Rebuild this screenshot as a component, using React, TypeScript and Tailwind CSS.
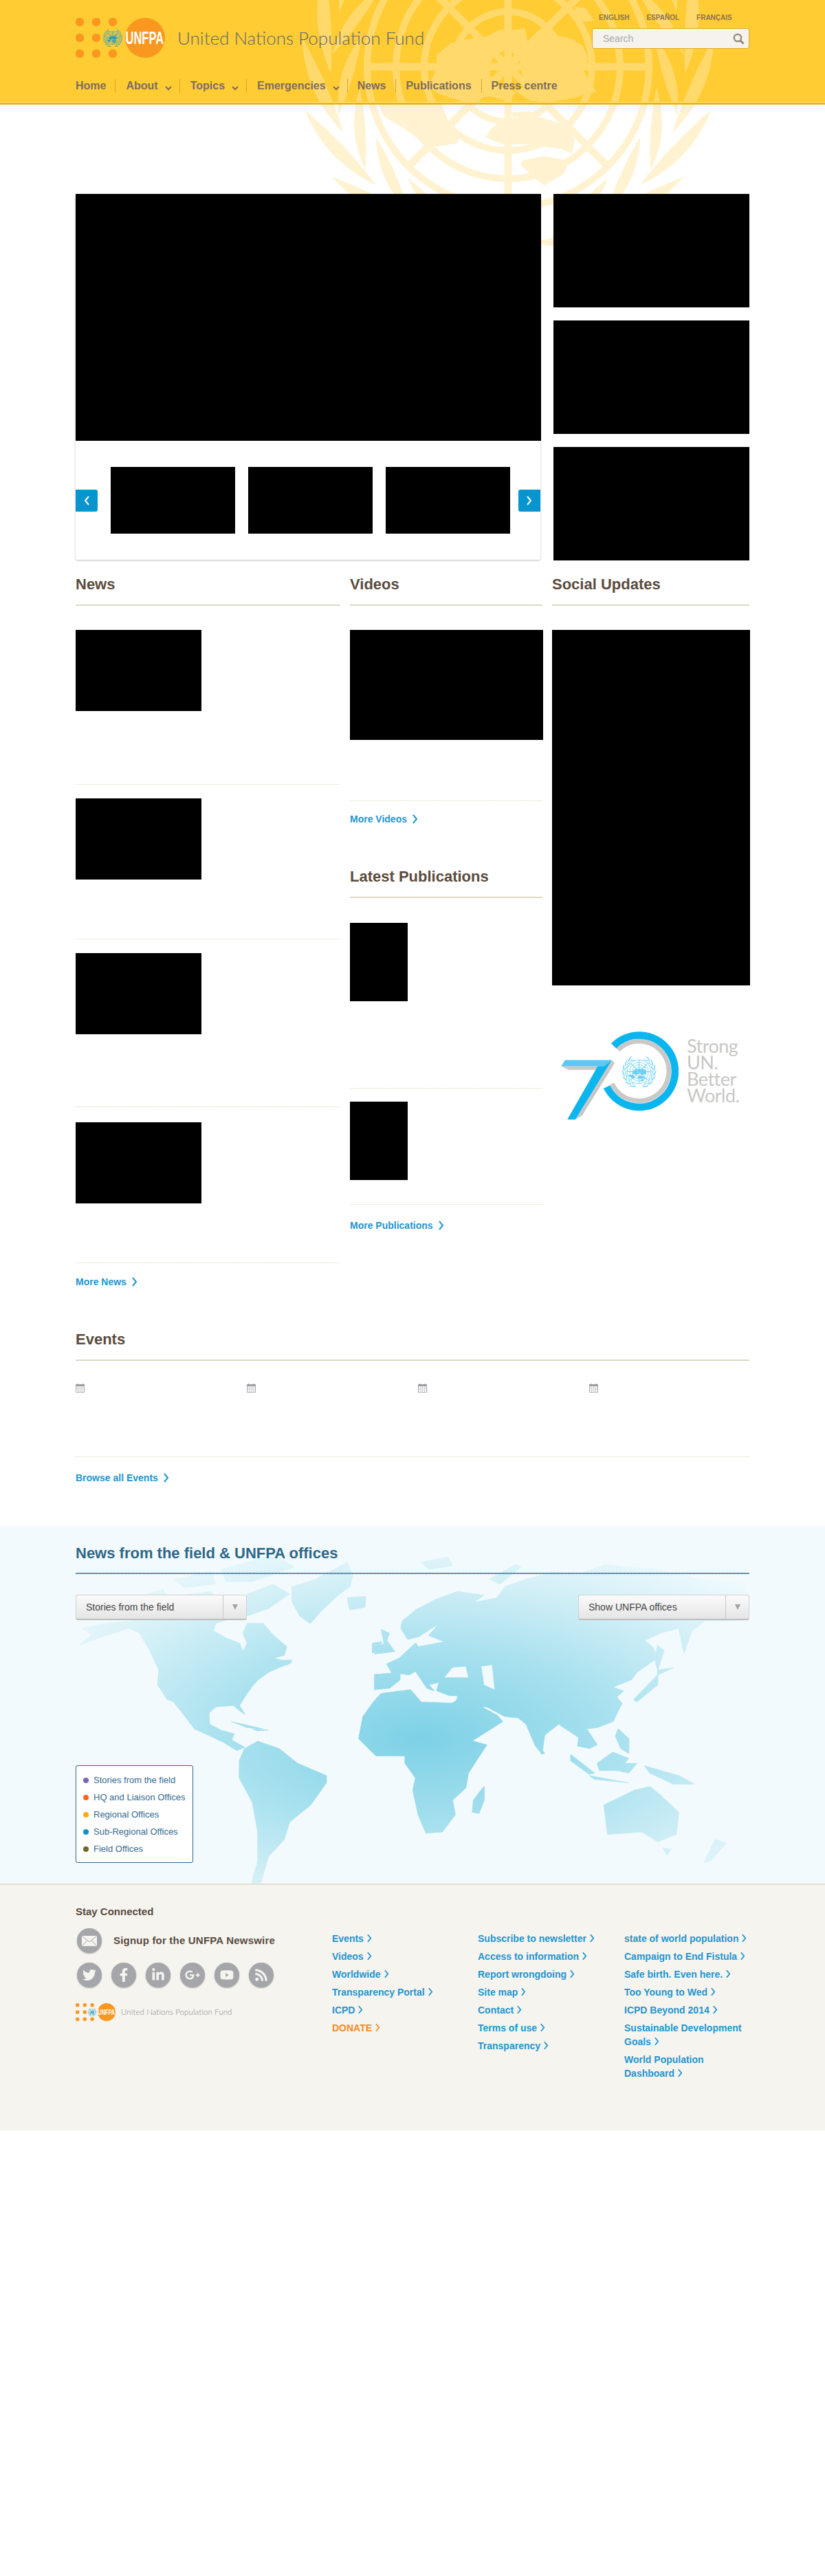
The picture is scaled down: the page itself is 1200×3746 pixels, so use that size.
import React from "react";
import { FaTwitter, FaFacebookF, FaLinkedinIn, FaGooglePlusG, FaYoutube, FaRss } from "react-icons/fa";

const P = (pts: number[][], fn?: (x: number, y: number) => string) =>
  "M" + pts.map(([x, y]) => (fn ? fn(x, y) : `${x},${y}`)).join(" L") + " Z";

const L = (X: number, Y: number) => `${(X / 2.489 - 309).toFixed(1)},${(Y / 3 - 97).toFixed(1)}`;

const land = [
  [[510,240],[560,190],[620,170],[690,160],[740,130],[800,130],[830,120],[840,180],[880,130],[930,150],[1000,170],[1040,200],[1060,260],[1040,300],[1060,350],[1090,400],[1000,430],[940,440],[850,440],[800,400],[770,440],[700,420],[600,440],[520,410],[480,380],[510,300]],
  [[700,290],[720,240],[765,215],[810,250],[820,320],[830,380],[790,400],[740,380],[705,330]],
  [[1010,30],[1050,35],[1080,90],[1040,95],[1015,60]],
  [[300,456],[530,456],[550,520],[590,600],[585,625],[510,640],[450,610],[380,550],[320,510]],
  [[700,570],[730,540],[790,510],[880,510],[950,535],[1000,580],[1010,620],[1000,670],[960,650],[850,630],[750,630],[690,600]],
  [[820,700],[900,680],[980,700],[1000,680],[970,760],[900,810],[850,760],[815,720]],
  [[780,490],[850,485],[860,510],[790,515]],
];
const landPath = land.map((s) => P(s, L)).join(" ");

const polar = (side: number, r: number, deg: number) => {
  const a = (deg * Math.PI) / 180;
  return `${(side * r * Math.sin(a)).toFixed(1)},${(r * Math.cos(a)).toFixed(1)}`;
};
const leaf = (side: number, r0: number, r1: number, a0: number, len: number, w: number) => {
  const rm = (r0 + r1) / 2;
  const am = a0 + len / 2;
  return `M${polar(side, r0, a0)} Q${polar(side, rm + w, am)} ${polar(side, r1, a0 + len)} Q${polar(side, rm - w, am)} ${polar(side, r0, a0)} Z`;
};
const wreathPath = (() => {
  const out: string[] = [];
  for (const side of [1, -1]) {
    for (let a = 8; a < 135; a += 20) {
      out.push(leaf(side, 258, 302, a, 30, 20));
      out.push(leaf(side, 256, 218, a + 6, 28, 17));
    }
  }
  return out.join(" ");
})();

const spokes = [0, 45, 90, 135]
  .map((d) => {
    const a = (d * Math.PI) / 180;
    const c = Math.cos(a);
    const s = Math.sin(a);
    const pt = (x: number, y: number) => `${(x * c - y * s).toFixed(2)},${(x * s + y * c).toFixed(2)}`;
    return `M${pt(-205, -5.5)} L${pt(205, -5.5)} L${pt(205, 5.5)} L${pt(-205, 5.5)} Z`;
  })
  .join(" ");

function Emblem({ id, color, dither, size, x, y, className }: { id: string; color: string; dither?: boolean; size: number; x?: number; y?: number; className?: string }) {
  const paint = dither ? `url(#${id})` : color;
  return (
    <svg x={x} y={y} width={size} height={size} viewBox="-310 -310 620 620" className={className} aria-hidden="true">
      {dither && (
        <defs>
          <pattern id={id} width="2" height="2" patternUnits="userSpaceOnUse">
            <rect x="0" y="0" width="1" height="1" fill={color} shapeRendering="crispEdges" />
            <rect x="1" y="1" width="1" height="1" fill={color} shapeRendering="crispEdges" />
          </pattern>
        </defs>
      )}
      <path d={wreathPath} fill={paint} />
      {[80, 122, 163, 205].map((r) => (
        <circle key={r} r={r} fill="none" stroke={paint} strokeWidth={10} />
      ))}
      <path d={spokes} fill={paint} />
      <path d={landPath} fill={paint} fillRule="evenodd" />
    </svg>
  );
}

function Logo({ id, w, h }: { id: string; w: number; h: number }) {
  const dots = [
    [6, 6], [30, 6], [54, 6],
    [6, 29], [30, 29],
    [6, 52], [30, 52], [54, 52],
  ];
  return (
    <svg width={w} height={h} viewBox="0 0 130 58" className="block shrink-0">
      {dots.map(([cx, cy]) => (
        <circle key={`${cx}-${cy}`} cx={cx} cy={cy} r={6.2} fill="#f9971f" />
      ))}
      <circle cx={101} cy={29} r={29} fill="#f9971f" />
      <Emblem id={id} color="#1f9cc4" size={30} x={39} y={14} />
      <text transform="translate(72.5 38) scale(0.66 1)" fontFamily="'Liberation Sans', Arial, sans-serif" fontWeight="700" fontSize={25} fill="#ffffff">
        UNFPA
      </text>
    </svg>
  );
}

const Chevron = ({ className, dir = "right" }: { className: string; dir?: "right" | "left" }) => (
  <svg viewBox="0 0 8 14" fill="none" stroke="currentColor" strokeWidth="2" className={className} aria-hidden="true">
    <path d={dir === "left" ? "M7 1 L2 7 L7 13" : "M1 1 L6 7 L1 13"} />
  </svg>
);

const Heading = ({ children, className = "" }: { children: React.ReactNode; className?: string }) => (
  <h2 className={`h-[46px] border-b-2 border-[#d9d9c3] text-[22px] leading-[30px] font-bold text-[#5a4b3d] ${className}`}>{children}</h2>
);

const More = ({ children, className = "" }: { children: React.ReactNode; className?: string }) => (
  <a className={`flex h-[20px] items-center text-[14px] leading-[20px] font-bold text-[#1f95cf] ${className}`}>
    {children}
    <Chevron className="ml-[8px] h-[14px] w-[8px]" />
  </a>
);

const Calendar = () => (
  <svg width="13" height="13" viewBox="0 0 13 13" className="block" aria-hidden="true">
    <rect x="0" y="1" width="13" height="12" fill="#a9abae" />
    <rect x="0" y="1" width="13" height="3" fill="#9b9da1" />
    <rect x="2" y="0" width="1.5" height="2" fill="#9b9da1" />
    <rect x="9.5" y="0" width="1.5" height="2" fill="#9b9da1" />
    <path d="M1 4h11v8H1z" fill="#ffffff" />
    <path d="M1 6.5h11M1 9h11M3.5 4v8M6.5 4v8M9.5 4v8" stroke="#d0d1d4" strokeWidth="1" fill="none" />
  </svg>
);

const map = {
  na: [[150,540],[175,495],[155,470],[200,450],[250,440],[280,380],[420,380],[440,430],[410,450],[405,480],[430,510],[455,530],[462,565],[470,530],[462,490],[470,450],[500,450],[520,500],[545,545],[540,580],[520,592],[555,610],[530,630],[510,650],[490,680],[478,710],[465,750],[455,785],[465,820],[452,800],[445,785],[410,790],[397,815],[398,860],[420,885],[445,900],[440,925],[465,955],[450,968],[425,935],[395,905],[370,880],[345,810],[330,770],[318,760],[300,700],[302,640],[285,560],[265,490],[245,470],[210,495],[180,515]],
  baffin: [[470,330],[520,290],[550,330],[510,390],[470,420],[465,380]],
  victoria: [[330,340],[400,320],[420,370],[360,375],[320,370]],
  ellesmere: [[420,230],[520,170],[560,220],[480,280],[430,280]],
  banks: [[280,330],[310,310],[320,360],[285,370]],
  arctic2: [[330,270],[400,240],[410,290],[350,305]],
  green: [[555,300],[600,270],[660,200],[670,255],[665,300],[640,340],[610,400],[590,450],[570,420],[555,360]],
  ice: [[660,345],[695,340],[693,385],[665,395]],
  uk: [[725,475],[740,490],[735,520],[750,565],[712,575],[730,530]],
  ireland: [[708,530],[725,525],[722,565],[708,570]],
  svalbard: [[800,200],[850,180],[860,215],[815,230]],
  novaya: [[930,270],[980,210],[990,220],[950,290]],
  eur: [[712,720],[712,658],[745,652],[735,615],[760,590],[775,560],[790,530],[795,545],[845,525],[815,500],[835,450],[795,505],[775,515],[762,470],[765,440],[790,395],[830,350],[870,320],[920,335],[900,365],[945,345],[960,300],[1000,270],[1050,240],[1100,250],[1150,210],[1250,230],[1330,270],[1420,285],[1420,440],[1340,440],[1315,480],[1300,570],[1290,470],[1255,490],[1225,520],[1240,545],[1250,590],[1210,650],[1200,680],[1165,710],[1185,725],[1172,750],[1182,775],[1165,850],[1135,875],[1115,880],[1135,945],[1120,960],[1098,950],[1100,915],[1075,880],[1062,860],[1035,905],[1030,980],[1018,950],[1000,860],[985,835],[960,830],[925,790],[915,790],[945,825],[955,850],[900,925],[865,800],[870,745],[855,745],[830,725],[835,690],[815,700],[825,725],[812,715],[790,645],[778,660],[760,655],[760,680],[740,715]],
  af: [[725,735],[780,720],[800,770],[860,775],[870,760],[880,850],[900,930],[925,945],[905,1010],[890,1060],[885,1120],[860,1170],[865,1230],[840,1300],[810,1305],[795,1230],[785,1130],[790,1080],[770,1020],[770,990],[715,990],[682,920],[690,830],[710,770]],
  mad: [[900,1170],[920,1115],[920,1170],[910,1225],[898,1220]],
  sa: [[465,960],[490,930],[530,960],[565,1020],[620,1070],[620,1100],[590,1190],[550,1260],[540,1330],[510,1400],[495,1510],[478,1510],[490,1420],[490,1300],[480,1180],[455,1080],[455,1010]],
  au: [[1148,1190],[1205,1130],[1235,1115],[1255,1150],[1290,1220],[1285,1310],[1250,1340],[1220,1300],[1155,1310]],
  tas: [[1260,1365],[1275,1370],[1268,1395]],
  nz: [[1360,1330],[1380,1345],[1350,1420],[1338,1425]],
  bor: [[1135,1020],[1165,975],[1195,1000],[1175,1050],[1140,1050]],
  sum: [[1085,985],[1130,1060],[1120,1065],[1085,1010]],
  jav: [[1120,1070],[1195,1100],[1130,1085]],
  ng: [[1225,1030],[1290,1070],[1320,1105],[1280,1105],[1235,1060]],
  phi: [[1175,880],[1195,920],[1195,980],[1180,960],[1170,910]],
  sul: [[1170,1020],[1210,1020],[1195,1060],[1175,1050]],
  jp: [[1205,760],[1250,660],[1250,700],[1210,770]],
  hok: [[1250,640],[1280,630],[1250,660]],
  sakh: [[1250,540],[1262,560],[1250,640],[1245,600]],
  sri: [[1028,960],[1035,980],[1028,982]],
  cub: [[440,850],[500,880],[470,875]],
  his: [[480,880],[510,885],[490,888]],
  nfl: [[535,600],[555,600],[545,620]],
};
const holes = [
  [[845,670],[860,630],[885,625],[890,670]],
  [[915,625],[935,620],[940,720],[920,700]],
];

function WorldMap() {
  return (
    <svg viewBox="0 53 1568 1457" preserveAspectRatio="none" className="absolute inset-0 h-full w-full" aria-hidden="true">
      <defs>
        <radialGradient id="mapg" gradientUnits="userSpaceOnUse" cx="800" cy="920" r="880">
          <stop offset="0" stopColor="#7dd1e6" />
          <stop offset="0.4" stopColor="#a6e0ee" />
          <stop offset="0.75" stopColor="#d4f0f7" />
          <stop offset="1" stopColor="#f0fafd" />
        </radialGradient>
      </defs>
      {Object.entries(map).map(([k, pts]) => (
        <path key={k} d={P(pts)} fill="url(#mapg)" stroke="url(#mapg)" strokeWidth="2" strokeLinejoin="round" />
      ))}
      {holes.map((pts, i) => (
        <path key={i} d={P(pts)} fill="#f3fafd" strokeLinejoin="round" />
      ))}
    </svg>
  );
}

const Select = ({ label }: { label: string }) => (
  <div className="flex h-[37px] w-[249px] rounded-[3px] border border-[#d0d0d0] border-b-2 border-b-[#bdbdbd] bg-gradient-to-b from-[#fbfbfb] to-[#e5e5e5] text-[14px] text-[#444444]">
    <div className="flex-1 pl-[14px] leading-[35px]">{label}</div>
    <div className="flex w-[34px] items-center justify-center border-l border-[#c8c8c8]">
      <span className="h-0 w-0 border-x-[4px] border-t-[8px] border-x-transparent border-t-[#a3a3a3]" />
    </div>
  </div>
);

const legend = [
  ["Stories from the field", "bg-[#7b68b0]"],
  ["HQ and Liaison Offices", "bg-[#f8691d]"],
  ["Regional Offices", "bg-[#fbab18]"],
  ["Sub-Regional Offices", "bg-[#0e91d0]"],
  ["Field Offices", "bg-[#6d6a28]"],
];

const col1 = ["Events", "Videos", "Worldwide", "Transparency Portal", "ICPD"];
const col2 = ["Subscribe to newsletter", "Access to information", "Report wrongdoing", "Site map", "Contact", "Terms of use", "Transparency"];
const col3 = ["state of world population", "Campaign to End Fistula", "Safe birth. Even here.", "Too Young to Wed", "ICPD Beyond 2014", "Sustainable Development Goals", "World Population Dashboard"];

const FLink = ({ children, orange }: { children: React.ReactNode; orange?: boolean }) => (
  <li className={`mb-[6px] text-[14px] leading-[20px] font-bold ${orange ? "text-[#f58a1f]" : "text-[#1f95cf]"}`}>
    {children}
    <Chevron className="ml-[5px] inline-block h-[13px] w-[7px] align-[-1px]" />
  </li>
);

const Circle = ({ children }: { children: React.ReactNode }) => (
  <span className="flex h-[36px] w-[36px] items-center justify-center rounded-full bg-[#a4a6a9] text-[20px] text-[#f6f4ef] shadow-[0_1px_2px_rgba(0,0,0,0.3)]">
    {children}
  </span>
);

export default function App() {
  return (
    <div className="relative min-h-[3746px] overflow-hidden bg-white font-['Liberation_Sans',Arial,sans-serif]">
      <header className="relative h-[152px] bg-[#ffcc33] shadow-[0_3px_12px_rgba(0,0,0,0.06)]">
        <div className="absolute inset-x-0 bottom-0 z-[2] h-[4px] border-b-2 border-[#e0a91c] bg-[#ffd75e]" />
        <div className="relative z-[2] mx-auto w-[980px] pt-[20px]">
          <div className="flex items-start justify-between">
            <div className="mt-[6px] flex items-center">
              <Logo id="em-a" w={130} h={58} />
              <span className="ml-[18px] font-['Lato',sans-serif] text-[26px] font-light text-[#5b6670]">United Nations Population Fund</span>
            </div>
            <div className="w-[229px]">
              <div className="flex h-[21px] gap-[25px] pl-[10px] text-[10px] leading-[12px] font-bold text-[#8a7355]">
                <span>ENGLISH</span>
                <span>ESPAÑOL</span>
                <span>FRANÇAIS</span>
              </div>
              <div className="flex h-[30px] items-center justify-between rounded-[3px] border border-[#e0a91c] bg-[#f6f3ee] pr-[6px] pl-[15px] text-[14px] text-[#a8a8a8]">
                <span>Search</span>
                <svg width="17" height="17" viewBox="0 0 17 17" fill="none" stroke="#8d8672" aria-hidden="true">
                  <circle cx="7" cy="7" r="5.2" strokeWidth="2.2" />
                  <path d="M11 11 L15.5 15.5" strokeWidth="2.8" />
                </svg>
              </div>
            </div>
          </div>
          <nav className="mt-[31px] flex h-[20px] items-center text-[16px] leading-[20px] font-bold text-[#7d6c5c]">
            <span className="border-r border-[#dba630] pr-[13px]">Home</span>
            {["About", "Topics", "Emergencies"].map((t) => (
              <span key={t} className="flex items-center border-r border-[#dba630] pr-[11px] pl-[15px]">
                {t}
                <svg width="10" height="7" viewBox="0 0 10 7" fill="none" stroke="currentColor" strokeWidth="2" className="mt-[6px] ml-[10px]" aria-hidden="true">
                  <path d="M1 1 L5 5 L9 1" />
                </svg>
              </span>
            ))}
            <span className="border-r border-[#dba630] px-[14px]">News</span>
            <span className="border-r border-[#dba630] px-[14px]">Publications</span>
            <span className="pl-[14px]">Press centre</span>
          </nav>
        </div>
      </header>

      <Emblem id="em-bg" color="#ffe6a3" dither size={620} className="absolute top-[-213px] left-[429px] z-[1]" />

      <main className="relative z-[2] mx-auto mt-[130px] w-[980px]">
        <section className="flex gap-[19px]">
          <div className="w-[676px]">
            <div className="h-[532px] rounded-[3px] bg-white shadow-[0_1px_3px_rgba(0,0,0,0.25)]">
              <div className="h-[359px] w-[677px] bg-black" />
              <div className="flex items-center pt-[38px]">
                <button className="flex h-[32px] w-[32px] items-center justify-center rounded-r-[3px] bg-[#0795cf] text-white">
                  <Chevron dir="left" className="h-[14px] w-[8px]" />
                </button>
                <div className="ml-[19px] flex gap-[19px]">
                  <div className="h-[97px] w-[181px] bg-black" />
                  <div className="h-[97px] w-[181px] bg-black" />
                  <div className="h-[97px] w-[181px] bg-black" />
                </div>
                <button className="ml-auto flex h-[32px] w-[32px] items-center justify-center rounded-l-[3px] bg-[#0795cf] text-white">
                  <Chevron className="h-[14px] w-[8px]" />
                </button>
              </div>
            </div>
          </div>
          <div className="flex w-[285px] flex-col gap-[19px]">
            <div className="h-[165px] bg-black" />
            <div className="h-[165px] bg-black" />
            <div className="h-[165px] bg-black" />
          </div>
        </section>

        <section className="flex items-start pt-[20px]">
          <div className="w-[385px]">
            <Heading>News</Heading>
            <div className="mt-[35px] h-[225px] border-b border-dotted border-[#d9d9c3]">
              <div className="h-[118px] w-[183px] bg-black" />
            </div>
            <div className="mt-[20px] h-[205px] border-b border-dotted border-[#d9d9c3]">
              <div className="h-[118px] w-[183px] bg-black" />
            </div>
            <div className="mt-[20px] h-[224px] border-b border-dotted border-[#d9d9c3]">
              <div className="h-[118px] w-[183px] bg-black" />
            </div>
            <div className="mt-[22px] h-[205px] border-b border-dotted border-[#d9d9c3]">
              <div className="h-[118px] w-[183px] bg-black" />
            </div>
            <More className="mt-[17px]">More News</More>
          </div>
          <div className="ml-[14px] w-[280px]">
            <Heading>Videos</Heading>
            <div className="mt-[35px] h-[249px] border-b border-dotted border-[#d9d9c3]">
              <div className="h-[160px] w-[281px] bg-black" />
            </div>
            <More className="mt-[16px]">More Videos</More>
            <Heading className="mt-[59px]">Latest Publications</Heading>
            <div className="mt-[36px] h-[241px] border-b border-dotted border-[#d9d9c3]">
              <div className="h-[114px] w-[84px] bg-black" />
            </div>
            <div className="mt-[19px] h-[150px] border-b border-dotted border-[#d9d9c3]">
              <div className="h-[114px] w-[84px] bg-black" />
            </div>
            <More className="mt-[20px]">More Publications</More>
          </div>
          <div className="ml-[14px] w-[287px]">
            <Heading>Social Updates</Heading>
            <div className="mt-[35px] h-[517px] w-[288px] bg-black" />
            <div className="mt-[67px] ml-[13px] flex items-start">
              <svg width="171" height="128" viewBox="108 120 513 385" aria-hidden="true">
                <path d="M108 272 L295 272 L270 288 L140 288 Z" fill="#c9c7c5" />
                <path d="M330 245 L170 505 L200 488 L342 258 Z" fill="#c9c7c5" />
                <path d="M357 201 A130 130 0 1 1 331 348" fill="none" stroke="#cbc9c7" strokeWidth="20" />
                <path d="M338 183 A157 157 0 1 1 308 362" fill="none" stroke="#0bb5ee" strokeWidth="32" />
                <path d="M108 272 L125 245 L330 245 L295 272 Z" fill="#5cc8f5" />
                <path d="M268 272 L295 272 L330 245 L170 505 L135 505 Z" fill="#0bb5ee" />
                <Emblem id="em-70" color="#6fd0f5" size={156} x={371} y={218} />
              </svg>
              <div className="mt-[9px] ml-[12px] font-['Lato',sans-serif] text-[27px] leading-[24px] tracking-[-0.5px] text-[#c9c7c5]">
                Strong
                <br />
                UN.
                <br />
                Better
                <br />
                World.
              </div>
            </div>
          </div>
        </section>

        <section className="mt-[59px]">
          <Heading>Events</Heading>
          <div className="flex h-[140px] border-b border-dotted border-[#d9d9c3] pt-[33px]">
            <div className="w-[249px]"><Calendar /></div>
            <div className="w-[249px]"><Calendar /></div>
            <div className="w-[249px]"><Calendar /></div>
            <div><Calendar /></div>
          </div>
          <More className="mt-[20px]">Browse all Events</More>
        </section>
      </main>

      <section className="relative mt-[60px] h-[520px] bg-[#f3fafd]">
        <WorldMap />
        <div className="relative mx-auto w-[980px] pt-[25px]">
          <h2 className="pb-[13px] text-[22px] leading-[30px] font-bold text-[#2e6688]">News from the field &amp; UNFPA offices</h2>
          <div className="h-[2px] bg-[repeating-linear-gradient(90deg,#3a7196_0_1px,#8fb0c4_1px_2px)]" />
          <div className="mt-[30px] flex justify-between">
            <Select label="Stories from the field" />
            <Select label="Show UNFPA offices" />
          </div>
          <div className="mt-[211px] h-[142px] w-[171px] rounded-[3px] border border-[#2e6688] bg-white pt-[8px] pl-[10px] text-[13px] leading-[25px] text-[#336a92]">
            {legend.map(([t, c]) => (
              <div key={t} className="flex items-center">
                <span className={`mr-[7px] h-[8px] w-[8px] rounded-full ${c}`} />
                {t}
              </div>
            ))}
          </div>
        </div>
      </section>

      <footer className="h-[359px] border-t-2 border-[#e4e0d2] bg-[#f6f4ef]">
        <div className="mx-auto flex w-[980px]">
          <div className="w-[373px] pt-[29px]">
            <h3 className="text-[15px] leading-[20px] font-bold text-[#574b40]">Stay Connected</h3>
            <div className="mt-[14px] ml-[2px] flex items-center">
              <Circle>
                <svg width="22" height="15" viewBox="0 0 22 15" fill="none" stroke="#a4a6a9" aria-hidden="true">
                  <rect width="22" height="15" fill="#f6f4ef" stroke="none" />
                  <path d="M0.5 0.5 L11 9 L21.5 0.5 M0.5 14.5 L8 6.5 M21.5 14.5 L14 6.5" strokeWidth="1" />
                </svg>
              </Circle>
              <span className="ml-[17px] text-[15px] font-bold tracking-[0.2px] text-[#574b40]">Signup for the UNFPA Newswire</span>
            </div>
            <div className="mt-[14px] ml-[2px] flex gap-[14px]">
              <Circle><FaTwitter /></Circle>
              <Circle><FaFacebookF /></Circle>
              <Circle><FaLinkedinIn /></Circle>
              <Circle><FaGooglePlusG className="text-[22px]" /></Circle>
              <Circle><FaYoutube /></Circle>
              <Circle><FaRss /></Circle>
            </div>
            <div className="mt-[23px] flex items-center">
              <Logo id="em-b" w={58} h={26} />
              <span className="ml-[8px] font-['Lato',sans-serif] text-[11.5px] font-light tracking-[0.1px] text-[#8a8a8a]">United Nations Population Fund</span>
            </div>
          </div>
          <ul className="w-[212px] pt-[68px]">
            {col1.map((t) => <FLink key={t}>{t}</FLink>)}
            <FLink orange>DONATE</FLink>
          </ul>
          <ul className="w-[213px] pt-[68px]">
            {col2.map((t) => <FLink key={t}>{t}</FLink>)}
          </ul>
          <ul className="w-[182px] pt-[68px]">
            {col3.map((t) => <FLink key={t}>{t}</FLink>)}
          </ul>
        </div>
      </footer>
    </div>
  );
}
